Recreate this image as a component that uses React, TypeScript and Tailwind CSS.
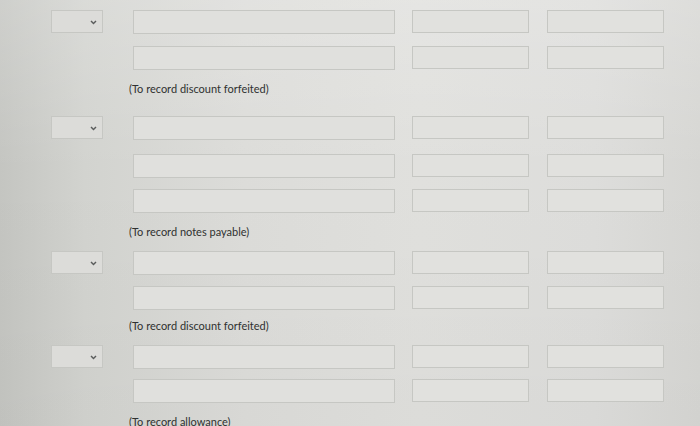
import React from "react";

function Chevron() {
  return (
    <svg width="7" height="5" viewBox="0 0 7 5" className="absolute right-[5px] top-[9px]">
      <path d="M1 1 L3.5 3.6 L6 1" fill="none" stroke="#5a5c5c" strokeWidth="1.4" />
    </svg>
  );
}

function Row({ select, mt }: { select?: boolean; mt: string }) {
  return (
    <div className={`flex items-center h-[23px] ${mt}`}>
      <div className="w-[52px] ml-[51px] h-[23px]">
        {select && (
          <div className="relative w-[52px] h-[23px] border border-[#c6c7c3] bg-[#dcdcd9]">
            <Chevron />
          </div>
        )}
      </div>
      <div className="ml-[30px] w-[262px] h-[24px] border border-[#c6c7c3] bg-[#e0e0dd]" />
      <div className="ml-[17px] w-[117px] h-[23px] border border-[#c6c7c3] bg-[#e1e1de]" />
      <div className="ml-[18px] w-[117px] h-[23px] border border-[#c6c7c3] bg-[#e1e1de]" />
    </div>
  );
}

function Label({ text, mt }: { text: string; mt: string }) {
  return (
    <div
      className={`ml-[129px] h-[16px] leading-[16px] text-[11px] text-[#2f3130] ${mt}`}
      style={{ fontFamily: "Lato, 'Open Sans', sans-serif" }}
    >
      {text}
    </div>
  );
}

export default function App() {
  return (
    <div
      className="w-[700px] h-[426px] overflow-hidden bg-[linear-gradient(90deg,#c4c5c1_0%,#d2d3cf_12%,#dcdcd9_35%,#e0e0dd_60%,#dddddb_85%,#d6d6d3_100%)]"
      style={{ fontFamily: "Lato, sans-serif" }}
    >
      <div className="w-full h-full bg-[linear-gradient(180deg,rgba(255,255,255,0.18)_0%,rgba(255,255,255,0)_40%,rgba(0,0,0,0.02)_100%)] pt-[10px]">
        <Row select mt="mt-0" />
        <Row mt="mt-[13px]" />
        <Label text="(To record discount forfeited)" mt="mt-[12px]" />
        <Row select mt="mt-[19px]" />
        <Row mt="mt-[15px]" />
        <Row mt="mt-[12px]" />
        <Label text="(To record notes payable)" mt="mt-[12px]" />
        <Row select mt="mt-[11px]" />
        <Row mt="mt-[12px]" />
        <Label text="(To record discount forfeited)" mt="mt-[9px]" />
        <Row select mt="mt-[11px]" />
        <Row mt="mt-[11px]" />
        <Label text="(To record allowance)" mt="mt-[12px]" />
      </div>
    </div>
  );
}
